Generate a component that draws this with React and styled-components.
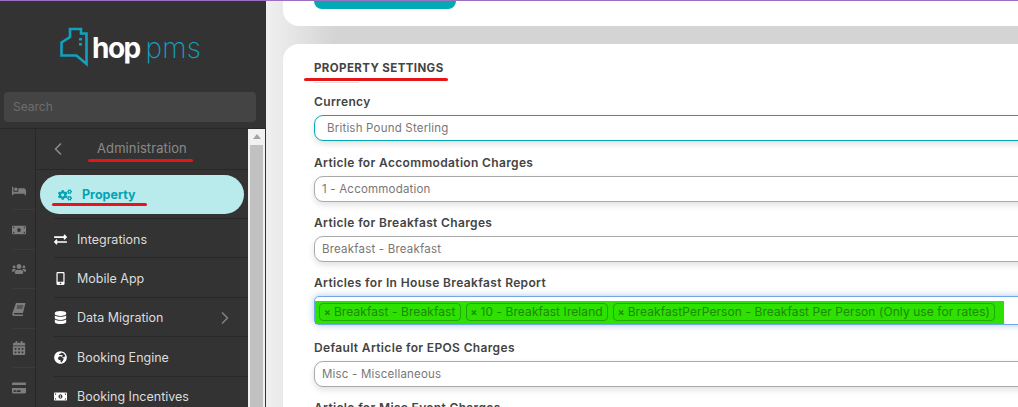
import styled, { createGlobalStyle } from 'styled-components';
import { ChevronLeft, ChevronRight } from 'lucide-react';
import {
  FaBed, FaMoneyBill, FaUsers, FaCalendarAlt, FaCreditCard, FaCogs,
  FaExchangeAlt, FaMobileAlt, FaDatabase, FaGlobeAfrica, FaMoneyBillAlt,
} from 'react-icons/fa';

const Global = createGlobalStyle`
  html, body { margin: 0; padding: 0; height: 100%; overflow: hidden; }
  body { font-family: Inter, "Liberation Sans", sans-serif; }
`;

const Page = styled.div`
  display: flex;
  height: 407px;
  border-top: 1px solid #9b6fc1;
  box-sizing: border-box;
  overflow: hidden;
`;

const Sidebar = styled.aside`
  width: 266px;
  flex: none;
  display: flex;
  flex-direction: column;
  background: #333;
`;
const Top = styled.div`
  height: 128px;
  flex: none;
  padding: 26px 10px 0 4px;
  box-sizing: border-box;
  border-bottom: 1px solid #282828;
`;
const Logo = styled.div`
  display: flex;
  justify-content: center;
  align-items: flex-start;
  height: 40px;
  margin: 0 0 25px 1px;
`;
const LogoText = styled.div`
  font-size: 28px;
  line-height: 30px;
  margin: 6px 0 0 4px;
`;
const Hop = styled.span`
  color: #fff;
  font-weight: 700;
  letter-spacing: -1.6px;
`;
const Pms = styled.span`
  color: #169fbc;
  font-weight: 200;
  margin-left: 6px;
  letter-spacing: 0.1px;
`;
const Search = styled.div`
  height: 30px;
  width: 252px;
  background: #444;
  border-radius: 4px;
  color: #6d6d6d;
  font-size: 12px;
  line-height: 30px;
  padding-left: 9px;
  box-sizing: border-box;
`;

const Body = styled.div`
  flex: 1;
  display: flex;
  min-height: 0;
`;
const Rail = styled.div`
  width: 36px;
  flex: none;
  box-sizing: border-box;
  border-right: 1px solid #282828;
  padding-top: 42px;
`;
const RailItem = styled.div`
  height: 39.4px;
  box-sizing: border-box;
  display: flex;
  align-items: center;
  padding-left: 12px;
  color: #7d7d7d;
  font-size: 14px;
  position: relative;
  &:not(:last-child)::after {
    content: '';
    position: absolute;
    left: 13px;
    right: 0;
    bottom: 0;
    border-bottom: 1px solid #3d3d3d;
  }
`;
const Menu = styled.nav`
  width: 212px;
  flex: none;
`;
const MenuHead = styled.div`
  height: 41px;
  display: flex;
  align-items: center;
  border-bottom: 1px solid #282828;
  box-sizing: border-box;
  color: #8a8a8a;
  padding-left: 12px;
`;
const HeadTitle = styled.span`
  position: relative;
  font-size: 13px;
  letter-spacing: 0.1px;
  margin-left: 29px;
  margin-top: -3px;
`;
const Mark = styled.i`
  position: absolute;
  height: 3px;
  border-radius: 2px;
  background: #e8141c;
  left: ${p => p.$l}px;
  right: ${p => p.$r}px;
  bottom: ${p => p.$b}px;
`;
const ActiveRow = styled.div`
  height: 39px;
  margin: 5px 4px 4px 4px;
  border-radius: 20px;
  background: #b9ebec;
  color: #04a3b3;
  display: flex;
  align-items: center;
  padding-left: 18px;
  font-size: 12.5px;
  font-weight: 700;
  gap: 10px;
  position: relative;
`;
const Row = styled.div`
  height: 39.4px;
  box-sizing: border-box;
  margin-left: 18px;
  padding-top: 2px;
  border-top: 1px solid #282828;
  display: flex;
  align-items: center;
  color: #dcdcdc;
  font-size: 12.5px;
  position: relative;
`;
const RowIcon = styled.span`
  width: 23px;
  margin-left: -5px;
  margin-right: 5px;
  display: flex;
  justify-content: center;
  color: #fff;
  font-size: 13px;
`;
const RowArrow = styled.span`
  position: absolute;
  right: 13px;
  top: 10px;
  color: #7f7f7f;
  display: flex;
`;
const Scroll = styled.div`
  width: 17px;
  flex: none;
  margin-right: 1px;
  background: #f1f1f1;
  padding-top: 16px;
  box-sizing: border-box;
  position: relative;
  &::before {
    content: '';
    position: absolute;
    top: 5px;
    left: 5px;
    border: 4px solid transparent;
    border-top: 0;
    border-bottom: 5px solid #a3a3a3;
  }
`;
const Thumb = styled.div`
  height: 100%;
  background: #c1c1c1;
  margin: 0 0 0 2px;
  width: 13px;
`;

const Main = styled.main`
  flex: 1;
  min-width: 0;
  overflow: hidden;
  padding-left: 17px;
  background: linear-gradient(90deg, #f0f0f0 0, #e8e8e8 20px, #d4d4d4 70px);
`;
const TopCard = styled.section`
  width: 800px;
  height: 25px;
  background: #fff;
  border-radius: 0 0 16px 16px;
  padding-left: 31px;
  box-sizing: border-box;
`;
const TealBar = styled.div`
  width: 142px;
  height: 8px;
  background: #03a9b3;
  border-radius: 0 0 9px 9px;
`;
const Card = styled.section`
  width: 800px;
  margin-top: 18px;
  height: 420px;
  background: #fff;
  border-radius: 16px 16px 0 0;
  padding: 16px 0 0 31px;
  box-sizing: border-box;
`;
const Title = styled.h2`
  position: relative;
  margin: 0 0 7px;
  height: 23px;
  font-size: 11.5px;
  line-height: 16px;
  font-weight: 700;
  color: #444;
  letter-spacing: 0.4px;
  &::after {
    content: '';
    position: absolute;
    left: 0;
    top: 22px;
    width: 45px;
    height: 1px;
    background: #ddd;
  }
`;
const Group = styled.div`
  height: ${p => p.$h || 60}px;
`;
const Label = styled.div`
  font-size: 12px;
  line-height: 16px;
  font-weight: 600;
  color: #444;
  letter-spacing: 0.35px;
  height: 25px;
  padding-top: 4px;
  box-sizing: border-box;
`;
const Field = styled.div`
  width: 740px;
  height: 26px;
  box-sizing: border-box;
  border: 1px solid ${p => (p.$focus ? '#03a9b3' : '#aaa')};
  border-radius: 9px;
  background: #fff;
  color: #777;
  font-size: 11.5px;
  letter-spacing: 0.2px;
  line-height: 24px;
  padding-left: ${p => (p.$focus ? 12 : 7)}px;
  box-shadow: 0 3px 6px rgba(0, 0, 0, 0.12);
`;
const MultiField = styled.div`
  width: 740px;
  height: 29px;
  box-sizing: border-box;
  border: 1px solid #6ea9e6;
  border-radius: 5px;
  background: #fff;
  box-shadow: 0 0 7px rgba(70, 130, 200, 0.45);
  padding: 3px 0 0 0;
`;
const Highlight = styled.div`
  display: inline-flex;
  background: #2de100;
  height: 23px;
  padding: 2px 9px 0 4px;
  box-sizing: border-box;
  gap: 5px;
`;
const Chip = styled.span`
  height: 18px;
  box-sizing: border-box;
  border: 1px solid #21a80a;
  border-radius: 4px;
  color: #23870c;
  font-size: 12px;
  letter-spacing: 0.08px;
  line-height: 16px;
  padding: 0 4px;
  white-space: nowrap;
`;
const ChipX = styled.b`
  margin-right: 3px;
  font-size: 10px;
`;

const BookIcon = () => (
  <svg width="14" height="14" viewBox="0 0 14 14" fill="currentColor">
    <path d="M4 1h9.5L11 11H2.6c-.9 0-.9 1.5 0 1.5h8.6L10.9 14H2C.5 14 0 12.6.4 11.2Z" />
    <path d="M5.3 3.4h6l-.3 1H5ZM4.8 5.6h6l-.3 1h-6Z" fill="#333" />
  </svg>
);

const railIcons = [FaBed, FaMoneyBill, FaUsers, BookIcon, FaCalendarAlt, FaCreditCard];
const menuRows = [
  { icon: FaExchangeAlt, text: 'Integrations' },
  { icon: FaMobileAlt, text: 'Mobile App' },
  { icon: FaDatabase, text: 'Data Migration', more: true },
  { icon: FaGlobeAfrica, text: 'Booking Engine' },
  { icon: FaMoneyBillAlt, text: 'Booking Incentives' },
];
const chips = [
  'Breakfast - Breakfast',
  '10 - Breakfast Ireland',
  'BreakfastPerPerson - Breakfast Per Person (Only use for rates)',
];

const LogoIcon = () => (
  <svg width="28" height="40" viewBox="0 0 28 40" fill="none">
    <path
      d="M1.5 15.5 L10 10 V2 H21 V6.5 H26.5 V37 L16.5 28.5 H1.5 Z"
      stroke="#12a0c0"
      strokeWidth="2.6"
      strokeLinejoin="miter"
    />
    <path d="M19 11h3v2.5h-3zM19 16h3v2.5h-3z" fill="#12a0c0" />
  </svg>
);

const App = () => {
  return (
    <Page>
      <Global />
      <Sidebar>
        <Top>
          <Logo>
            <LogoIcon />
            <LogoText><Hop>hop</Hop><Pms>pms</Pms></LogoText>
          </Logo>
          <Search>Search</Search>
        </Top>
        <Body>
          <Rail>
            {railIcons.map((Icon, i) => (
              <RailItem key={i}><Icon /></RailItem>
            ))}
          </Rail>
          <Menu>
            <MenuHead>
              <ChevronLeft size={20} strokeWidth={2} />
              <HeadTitle>
                Administration
                <Mark $l={-9} $r={-6} $b={-6} />
              </HeadTitle>
            </MenuHead>
            <ActiveRow>
              <FaCogs size={14} />
              Property
              <Mark $l={12} $r={97} $b={8} />
            </ActiveRow>
            {menuRows.map(({ icon: Icon, text, more }) => (
              <Row key={text}>
                <RowIcon><Icon /></RowIcon>
                {text}
                {more && <RowArrow><ChevronRight size={20} strokeWidth={2} /></RowArrow>}
              </Row>
            ))}
          </Menu>
          <Scroll><Thumb /></Scroll>
        </Body>
      </Sidebar>
      <Main>
        <TopCard><TealBar /></TopCard>
        <Card>
          <Title>
            PROPERTY SETTINGS
            <Mark $l={-10} $r={635} $b={2} />
          </Title>
          <Group $h={61}>
            <Label>Currency</Label>
            <Field $focus>British Pound Sterling</Field>
          </Group>
          <Group>
            <Label>Article for Accommodation Charges</Label>
            <Field>1 - Accommodation</Field>
          </Group>
          <Group>
            <Label>Article for Breakfast Charges</Label>
            <Field>Breakfast - Breakfast</Field>
          </Group>
          <Group $h={65}>
            <Label>Articles for In House Breakfast Report</Label>
            <MultiField>
              <Highlight>
                {chips.map(c => (
                  <Chip key={c}><ChipX>×</ChipX>{c}</Chip>
                ))}
              </Highlight>
            </MultiField>
          </Group>
          <Group>
            <Label>Default Article for EPOS Charges</Label>
            <Field>Misc - Miscellaneous</Field>
          </Group>
          <Group>
            <Label>Article for Misc Event Charges</Label>
          </Group>
        </Card>
      </Main>
    </Page>
  );
};

export default App;
